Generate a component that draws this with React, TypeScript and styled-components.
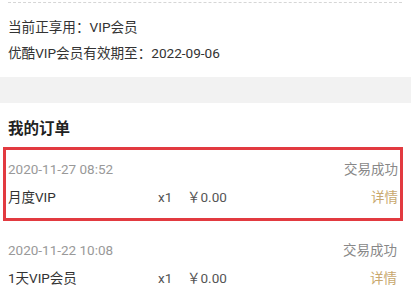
import React from "react";
import styled, { createGlobalStyle } from "styled-components";

const GlobalStyle = createGlobalStyle`
  html, body {
    margin: 0;
    padding: 0;
    background: #ffffff;
  }
  body {
    font-family: Roboto, "Noto Sans CJK SC", sans-serif;
    color: #333333;
  }
`;

type Order = {
  time: string;
  status: string;
  name: string;
  count: string;
  price: string;
};

const orders: Order[] = [
  {
    time: "2020-11-27 08:52",
    status: "交易成功",
    name: "月度VIP",
    count: "x1",
    price: "￥0.00",
  },
  {
    time: "2020-11-22 10:08",
    status: "交易成功",
    name: "1天VIP会员",
    count: "x1",
    price: "￥0.00",
  },
];

const App: React.FC = () => {
  return (
    <>
      <GlobalStyle />
      <STPage>
        <STVip>
          <div className="line">当前正享用：VIP会员</div>
          <div className="line">优酷VIP会员有效期至：2022-09-06</div>
        </STVip>
        <STGap />
        <STTitle>我的订单</STTitle>
        {orders.map((order, i) => (
          <STOrder key={order.time} $active={i === 0}>
            <div className="top">
              <span className="time">{order.time}</span>
              <span className="status">{order.status}</span>
            </div>
            <div className="bottom">
              <span className="name">{order.name}</span>
              <span className="count">{order.count}</span>
              <span className="price">{order.price}</span>
              <span className="detail">详情</span>
            </div>
          </STOrder>
        ))}
      </STPage>
    </>
  );
};

const STPage = styled.div`
  width: 411px;
  height: 300px;
  overflow: hidden;
`;

const STVip = styled.div`
  margin: 2px 9px 0 8px;
  border-top: 1px dashed #d6d6d6;
  padding: 11px 0 11px;
  font-size: 13.6px;
  .line {
    line-height: 26px;
    color: #333333;
  }
`;

const STGap = styled.div`
  height: 26px;
  background-color: #f2f2f2;
`;

const STTitle = styled.div`
  padding: 14px 8px 0;
  height: 30px;
  line-height: 24px;
  font-size: 15.5px;
  font-weight: 700;
  color: #222222;
`;

const STOrder = styled.div<{ $active: boolean }>`
  box-sizing: border-box;
  font-size: 13.5px;
  margin: ${(p) => (p.$active ? "0 8px 4px 3px" : "0")};
  padding: ${(p) => (p.$active ? "9px 2px 0 2px" : "15px 14px 0 8px")};
  border: ${(p) => (p.$active ? "3px solid #e23a40" : "none")};
  border-bottom: ${(p) =>
    p.$active ? "3px solid #e23a40" : "1px solid #eeeeee"};
  height: ${(p) => (p.$active ? "74px" : "78px")};
  .top,
  .bottom {
    display: flex;
    align-items: center;
    line-height: 20px;
  }
  .bottom {
    margin-top: 8px;
  }
  .time {
    flex: 1;
    color: #999999;
  }
  .status {
    color: #888888;
  }
  .name {
    width: 150px;
    color: #333333;
  }
  .count {
    width: 29px;
    color: #555555;
  }
  .price {
    flex: 1;
    color: #555555;
  }
  .detail {
    color: #c8a86e;
  }
`;

export default App;
